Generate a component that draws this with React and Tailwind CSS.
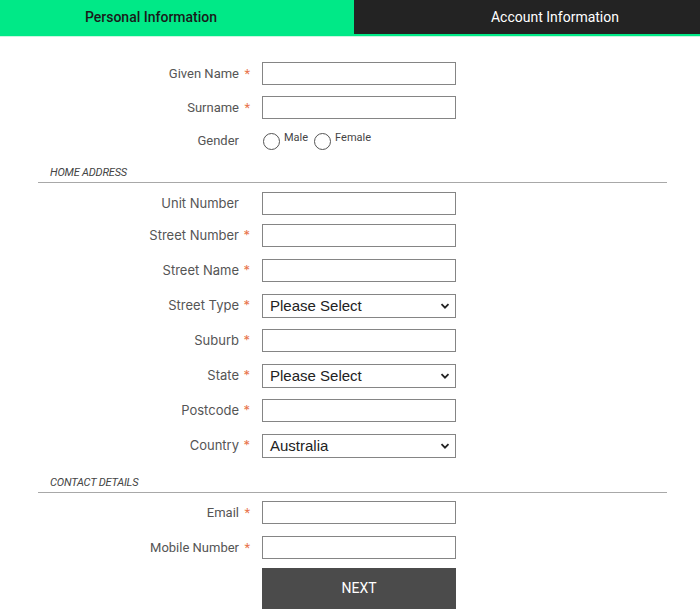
import React from "react";

const labelFont = { fontFamily: "Roboto, 'Liberation Sans', sans-serif" };

function Label({ text, req, font }) {
  return (
    <div className="w-[250px] flex justify-end items-center text-[13px] text-[#555]" style={font || labelFont}>
      <span>{text}</span>
      <span className={"w-[11px] text-right text-[#e8734a] " + (req ? "" : "invisible")}>*</span>
    </div>
  );
}

function Field({ text, req = true, mt, font, children }) {
  return (
    <div className={"flex items-center " + mt}>
      <Label text={text} req={req} font={font} />
      <div className="ml-[12px]">{children || <div className="w-[194px] h-[23px] border border-[#858585] bg-white" />}</div>
    </div>
  );
}

function Select({ value }) {
  return (
    <div className="w-[194px] h-[24px] border border-[#858585] bg-white flex items-center justify-between pl-[7px] pr-[5px]">
      <span className="text-[15px] text-[#222]" style={{ fontFamily: "'Liberation Sans', Arial, sans-serif" }}>{value}</span>
      <svg width="10" height="10" viewBox="0 0 10 10"><path d="M1.5 3.2 L5 6.7 L8.5 3.2" fill="none" stroke="#222" strokeWidth="1.8" /></svg>
    </div>
  );
}

function Section({ title, mt }) {
  return (
    <div className={"ml-[38px] mr-[33px] border-b border-[#a8a8a8] pl-[12px] pb-[2px] text-[11px] leading-[14px] " + mt}>
      <span className="italic text-[#444] tracking-[-0.2px]" style={{ fontFamily: "Roboto, 'Liberation Sans', sans-serif" }}>{title}</span>
    </div>
  );
}

const addrFont = { fontFamily: "Inter, 'Liberation Sans', sans-serif" };

export default function App() {
  return (
    <div className="w-[700px] h-[614px] bg-white" style={labelFont}>
      <div className="flex h-[36px] border-b-2 border-[#00e987]">
        <div className="w-[354px] bg-[#00e987] flex items-center justify-center pr-[52px] text-[14px] font-medium text-[#1a1a1a]">
          Personal Information
        </div>
        <div className="flex-1 bg-[#232323] flex items-center justify-center pl-[56px] text-[14px] text-white">
          Account Information
        </div>
      </div>
      <div className="h-[1px] bg-[#c8f7e0]" />
      <div className="flex flex-col">
        <Field text="Given Name" mt="mt-[25px]" />
        <Field text="Surname" mt="mt-[11px]" />
        <div className="flex items-center mt-[10px] h-[24px]">
          <Label text="Gender" req={false} />
          <div className="ml-[13px] flex items-center gap-[4px]">
            <div className="w-[17px] h-[17px] rounded-full border border-[#555]" />
            <span className="text-[11px] text-[#444] -mt-[5px]">Male</span>
            <div className="ml-[2px] w-[17px] h-[17px] rounded-full border border-[#555]" />
            <span className="text-[11px] text-[#444] -mt-[5px]">Female</span>
          </div>
        </div>
        <Section title="HOME ADDRESS" mt="mt-[13px]" />
        <Field text="Unit Number" req={false} mt="mt-[9px]" font={addrFont} />
        <Field text="Street Number" mt="mt-[9px]" font={addrFont} />
        <Field text="Street Name" mt="mt-[12px]" font={addrFont} />
        <Field text="Street Type" mt="mt-[12px]" font={addrFont}><Select value="Please Select" /></Field>
        <Field text="Suburb" mt="mt-[11px]" font={addrFont} />
        <Field text="State" mt="mt-[12px]" font={addrFont}><Select value="Please Select" /></Field>
        <Field text="Postcode" mt="mt-[11px]" font={addrFont} />
        <Field text="Country" mt="mt-[12px]" font={addrFont}><Select value="Australia" /></Field>
        <Section title="CONTACT DETAILS" mt="mt-[18px]" />
        <Field text="Email" mt="mt-[8px]" />
        <Field text="Mobile Number" mt="mt-[12px]" />
        <div className="flex mt-[9px]">
          <div className="w-[262px]" />
          <div className="w-[194px] h-[41px] bg-[#4b4b4b] flex items-center justify-center text-white text-[14px]">NEXT</div>
        </div>
      </div>
    </div>
  );
}
